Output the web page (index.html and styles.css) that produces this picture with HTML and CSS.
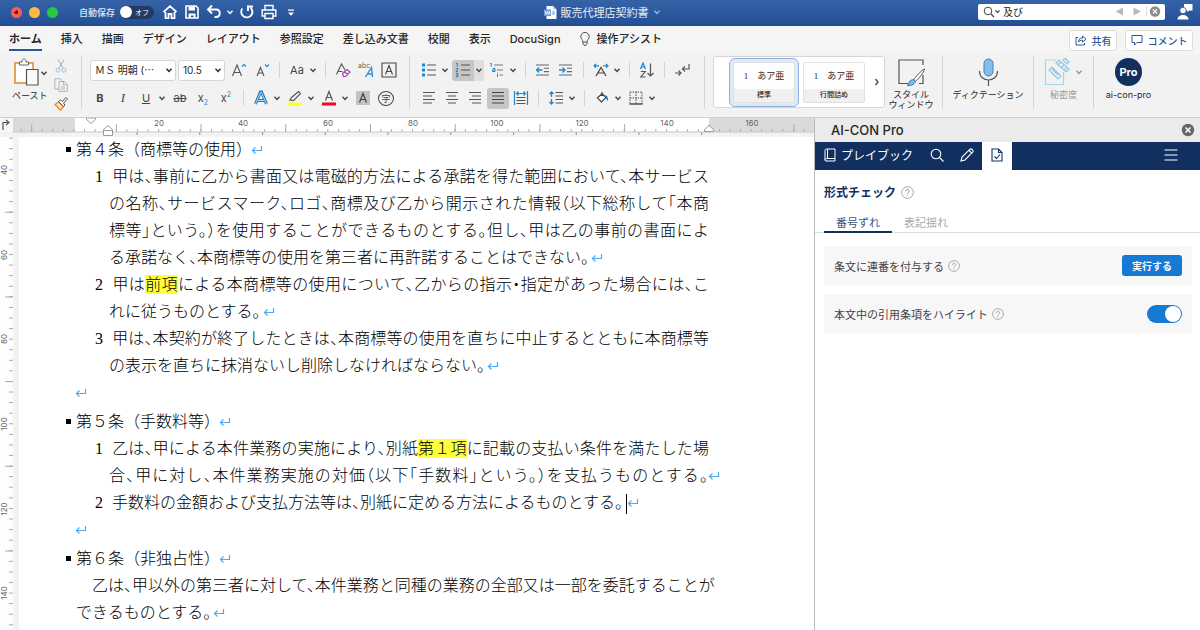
FILE: index.html
```html
<!doctype html>
<html lang="ja">
<head>
    <meta charset="UTF-8">
    <meta name="viewport" content="width=device-width, initial-scale=1.0">
    <title>販売代理店契約書</title>
    <link rel="stylesheet" href="styles.css">
</head>
<body>
<svg class="defs" aria-hidden="true">
    <symbol id="chev" viewBox="0 0 8 8"><path d="M1.5 2.8 4 5.4 6.500 2.800" fill="none" stroke="currentColor" stroke-width="1.400"/></symbol>
    <symbol id="ret" viewBox="0 0 12 10"><path d="M10.500 1v4.500H1.500M4.500 2.500l-3 3 3 3" fill="none" stroke="#4da9f5" stroke-width="1.200"/></symbol>
    <symbol id="help" viewBox="0 0 12 12"><circle cx="6" cy="6" r="5.400" fill="none" stroke="#999" stroke-width=".8"/><path d="M4.400 4.800C4.400 2.600 7.600 2.600 7.600 4.700 7.600 5.900 6 5.900 6 7.300M6 8.200v1" fill="none" stroke="#999" stroke-width=".9"/></symbol>
</svg>

<header class="titlebar">
    <div class="title-left">
        <span class="light red"></span><span class="light yellow"></span><span class="light green"></span>
        <span class="autosave">自動保存</span>
        <button class="auto-toggle"><i></i>オフ</button>
        <button class="tb" aria-label="ホーム"><svg width="16" height="16" viewBox="0 0 16 16"><path d="M1.500 8 8 2.200 14.500 8M3.500 8v6.200H6.500V10h3v4.200h3V8" fill="none" stroke="#fff" stroke-width="1.800"/></svg></button>
        <button class="tb" aria-label="保存"><svg width="16" height="16" viewBox="0 0 16 16"><path d="M2 2h10l2 2v10H2z" fill="none" stroke="#fff" stroke-width="1.600"/><path d="M4.500 2.500h6.500v4h-6.500zM4.500 9.500h7V14h-2v-2.500H7V14H4.500z" fill="#fff"/></svg></button>
        <button class="tb" aria-label="元に戻す"><svg width="16" height="16" viewBox="0 0 16 16"><path d="M6 1.500 2 5.500l4 4M2.500 5.500H10c5 0 5 7.500 0 7.500H8.500" fill="none" stroke="#fff" stroke-width="1.900"/></svg></button>
        <button class="chev light-chev" aria-label="履歴"><svg width="8" height="8"><use href="#chev"/></svg></button>
        <button class="tb" aria-label="やり直し"><svg width="16" height="16" viewBox="0 0 16 16"><path d="M3.300 4.500A5.600 5.600 0 1 0 11.500 3.600M9 7V2.500h5" fill="none" stroke="#fff" stroke-width="1.900"/></svg></button>
        <button class="tb" aria-label="印刷"><svg width="16" height="16" viewBox="0 0 16 16"><path d="M4 6V1.500h8V6M3.500 12H1.200V6h13.600v6h-2.300M4 9.500h8v5H4z" fill="none" stroke="#fff" stroke-width="1.400"/></svg></button>
        <button class="tb" aria-label="カスタマイズ"><svg width="16" height="16" viewBox="0 0 16 16"><path d="M5 5.500h6v1.200H5zM5 8.500h6l-3 3.200z" fill="#fff"/></svg></button>
    </div>
    <div class="doc-title">
        <svg width="13" height="13" viewBox="0 0 13 13"><path d="M2.500 0H9l3.500 3.500V13h-10z" fill="#fff"/><path d="M9 0v3.500h3.500z" fill="#b9cdea"/><path d="M0 3.500h7v6.500H0z" fill="#6d99dc"/><path d="m1 5 1.200 3.500L3.500 5.200 4.800 8.500 6 5" fill="none" stroke="#fff" stroke-width=".9"/><path d="M8 6h3M8 8h3" stroke="#6d99dc"/></svg>
        <span>販売代理店契約書</span>
        <svg width="8" height="8"><use href="#chev"/></svg>
    </div>
    <div class="title-right">
        <label class="search">
            <svg width="18" height="12" viewBox="0 0 18 12"><circle cx="5" cy="5" r="3.800" fill="none" stroke="#444"/><path d="m8 8 3 3M12.500 4.500l2 2 2-2" fill="none" stroke="#444" stroke-width="1.200"/></svg>
            <input type="text" value="及び" aria-label="検索">
            <svg width="48" height="14" viewBox="0 0 48 14"><path d="M9 2.500v8L1.500 6.500zM19.500 2.500v8l7.500-4z" fill="#b9b9b9"/><path d="M32.500 1.500v10" stroke="#ddd"/><circle cx="41" cy="6.500" r="5.200" fill="#8c8c8c"/><path d="m39 4.500 4 4m0-4-4 4" stroke="#fff" stroke-width="1.200"/></svg>
        </label>
        <svg width="16" height="18" viewBox="0 0 16 18"><path d="M7 1h8.500v6.500h-3L10.500 9V7.500H7z" fill="#fff"/><circle cx="6" cy="7.500" r="3.200" fill="#fff" stroke="#28539b" stroke-width=".8"/><path d="M.5 16.500c0-6 11-6 11 0z" fill="#fff"/></svg>
    </div>
</header>

<nav class="tabs">
    <a href="#" class="current">ホーム</a>
    <a href="#">挿入</a>
    <a href="#">描画</a>
    <a href="#">デザイン</a>
    <a href="#">レイアウト</a>
    <a href="#">参照設定</a>
    <a href="#">差し込み文書</a>
    <a href="#">校閲</a>
    <a href="#">表示</a>
    <a href="#">DocuSign</a>
    <a href="#" class="assist"><svg width="10" height="14" viewBox="0 0 10 14"><path d="M3 10C3 8 .8 7 .8 4.600A4.200 4.200 0 0 1 9.200 4.600C9.200 7 7 8 7 10zM3 10v2.200L4 13.300h2l1-1.100V10" fill="none" stroke="#444" stroke-width=".9"/></svg>操作アシスト</a>
    <div class="tab-actions">
        <button class="outline share"><svg width="12" height="12" viewBox="0 0 12 12"><path d="M3 3.500H1v7.500h8.500V9M3.500 8c0-3 1.500-4 4-4V2l3.500 3.200-3.500 3V6.200C5.500 6.200 4.500 6.700 3.500 8z" fill="none" stroke="#2b579a"/></svg>共有</button>
        <button class="outline comment"><svg width="12" height="12" viewBox="0 0 12 12"><path d="M1 1.500h10v7H6L3.500 11V8.500H1z" fill="none" stroke="#2b579a"/></svg>コメント</button>
    </div>
</nav>

<div class="ribbon">
    <section class="group clipboard">
        <div class="paste">
            <button class="big" aria-label="ペースト"><svg width="26" height="28" viewBox="0 0 26 28"><path d="M2 5h18v20H2z" fill="#fff" stroke="#e8a15c" stroke-width="2"/><path d="M6.500 7V4H9c0-4 4-4 4 0h2.500v3z" fill="#fff" stroke="#666"/><path d="M13.500 11.500H25V27H13.500z" fill="#fafafa" stroke="#555" stroke-width="1.200"/></svg></button>
            <button class="chev"><svg width="8" height="8"><use href="#chev"/></svg></button>
            <span>ペースト</span>
        </div>
        <div class="clip-tools">
            <button aria-label="切り取り"><svg width="14" height="14" viewBox="0 0 14 14"><path d="M4 .5 9.200 9.500M10 .5 4.800 9.500" stroke="#aaa"/><circle cx="4" cy="11.200" r="2" fill="none" stroke="#9cc6e6"/><circle cx="10" cy="11.200" r="2" fill="none" stroke="#9cc6e6"/></svg></button>
            <button aria-label="コピー"><svg width="14" height="14" viewBox="0 0 14 14"><path d="M5 11H.8V.7H6L8.500 3M5 3.500h5l3.300 3V13.400H5zM9.500 3.800v3h3.500M7 9h4M7 11h4" fill="none" stroke="#b5b5b5"/></svg></button>
            <button aria-label="書式"><svg width="14" height="14" viewBox="0 0 14 14"><path d="M1 7.500 6.500 13 9.500 9.500 4.500 5z" fill="#ffe2c4" stroke="#e8883a" stroke-width="1.300"/><path d="m4.500 4.500 5 5 1.500-1.500-1.500-2 4-4L12 .5 8.500 4.500 6.500 3z" fill="#fff" stroke="#555"/></svg></button>
        </div>
    </section>

    <section class="group font">
        <div class="row">
            <div class="pickers">
                <div class="pick"><select class="face" aria-label="フォント"><option>ＭＳ 明朝 (⋯</option></select><svg width="8" height="8"><use href="#chev"/></svg></div>
                <div class="pick"><select class="size" aria-label="サイズ"><option>10.5</option></select><svg width="8" height="8"><use href="#chev"/></svg></div>
            </div>
            <button class="ic" aria-label="拡大"><svg width="16" height="16" viewBox="0 0 16 16"><path d="M1.500 14 6 3l4.500 11M3 10.500h6" fill="none" stroke="#555" stroke-width="1.100"/><path d="m11 4.500 2-2 2 2" fill="none" stroke="#2e8fd0" stroke-width="1.300"/></svg></button>
            <button class="ic" aria-label="縮小"><svg width="16" height="16" viewBox="0 0 16 16"><path d="M3 14 6.500 5.500 10 14M4 11h5" fill="none" stroke="#555" stroke-width="1.100"/><path d="m11 2.500 2 2 2-2" fill="none" stroke="#2e8fd0" stroke-width="1.300"/></svg></button>
            <i class="sep"></i>
            <button class="ic txt">Aa</button>
            <button class="chev"><svg width="8" height="8"><use href="#chev"/></svg></button>
            <i class="sep"></i>
            <button class="ic" aria-label="書式のクリア"><svg width="16" height="16" viewBox="0 0 16 16"><path d="M1.500 12.500 6.500 2 10 8M3 9.500h4.500" fill="none" stroke="#555" stroke-width="1.100"/><path d="m7.500 11.500 4.500-4 3 2.500-4.500 4.500-2 0zM9.500 9.500l3 3" fill="#fff" stroke="#a23fb0" stroke-width="1.200"/></svg></button>
            <button class="ic" aria-label="文字の効果"><svg width="16" height="16" viewBox="0 0 16 16"><text x="0" y="6" class="tiny">abc</text><path d="M7.500 15 13.500 5.500l1 9.500M10 12h4.500" fill="none" stroke="#2e8fd0" stroke-width="1.400"/></svg></button>
            <button class="ic" aria-label="囲み線"><svg width="16" height="16" viewBox="0 0 16 16"><path d="M1 1h14v14H1zM4.500 12.500 8 3.500l3.500 9M5.600 9.500h4.800" fill="none" stroke="#444" stroke-width="1.100"/></svg></button>
        </div>
        <div class="row second">
            <button class="ic txt bold">B</button>
            <button class="ic txt italic">I</button>
            <button class="ic txt under">U</button>
            <button class="chev"><svg width="8" height="8"><use href="#chev"/></svg></button>
            <button class="ic txt strike">ab</button>
            <button class="ic txt script">x<sub>2</sub></button>
            <button class="ic txt script">x<sup>2</sup></button>
            <i class="sep"></i>
            <button class="ic" aria-label="文字飾り"><svg width="16" height="16" viewBox="0 0 16 16"><path d="M2.500 14 7.500 2h1L13.500 14M4.500 10.500h7" fill="none" stroke="#1c78c0" stroke-width="3"/><path d="M2.500 14 7.500 2.500h1L13.500 14M4.500 10.500h7" fill="none" stroke="#b5dcf5" stroke-width="1"/></svg></button>
            <button class="chev"><svg width="8" height="8"><use href="#chev"/></svg></button>
            <button class="ic" aria-label="蛍光ペン"><svg width="16" height="16" viewBox="0 0 16 16"><path d="m3.500 9 1 1.500L7 10.200 13.500 3.500 11.500 1.500 4.500 7.500zM3.500 9 2.500 10.800" fill="none" stroke="#555" stroke-width="1.200"/><path d="M1 12.500h14v3H1z" fill="#ffff2a"/></svg></button>
            <button class="chev"><svg width="8" height="8"><use href="#chev"/></svg></button>
            <button class="ic" aria-label="文字の色"><svg width="16" height="16" viewBox="0 0 16 16"><path d="M4.500 10.500 8 1.500l3.500 9M5.600 7.500h4.800" fill="none" stroke="#555" stroke-width="1.200"/><path d="M1 12.500h14v3H1z" fill="#f00c1d"/></svg></button>
            <button class="chev"><svg width="8" height="8"><use href="#chev"/></svg></button>
            <button class="ic" aria-label="網かけ"><svg width="16" height="16" viewBox="0 0 16 16"><path d="M1 1h14v14H1z" fill="#c4c2c0"/><path d="M4.500 12.500 8 3.500l3.500 9M5.600 9.500h4.800" fill="none" stroke="#444" stroke-width="1.200"/></svg></button>
            <button class="ic txt circled">字</button>
        </div>
    </section>

    <section class="group para">
        <div class="row">
            <button class="ic" aria-label="箇条書き"><svg width="16" height="16" viewBox="0 0 16 16"><path d="M1 1.500h3v3H1zM1 6.500h3v3H1zM1 11.500h3v3H1z" fill="#1c86d1"/><path d="M6 3h9M6 8h9M6 13h9" stroke="#555" stroke-width="1.200"/></svg></button>
            <button class="chev"><svg width="8" height="8"><use href="#chev"/></svg></button>
            <button class="ic on" aria-label="段落番号"><svg width="16" height="16" viewBox="0 0 16 16"><path d="M1 1.500h1.300v3.200M.8 6.500h2v1.500l-2 1.500h2.200M.8 11.200h2v3.500h-2M1 13h2" fill="none" stroke="#1c86d1"/><path d="M6 3h9M6 8h9M6 13h9" stroke="#555" stroke-width="1.200"/></svg></button>
            <button class="chev on-chev"><svg width="8" height="8"><use href="#chev"/></svg></button>
            <button class="ic" aria-label="アウトライン"><svg width="16" height="16" viewBox="0 0 16 16"><path d="M1 1.500h1.300v3.200M3.500 6.500h2.500v3h-2.500v-1.500h2.500M8.500 12v3M8.500 10.500v.8" fill="none" stroke="#1c86d1"/><path d="M5 3h9M8 8h6M10.500 13H14" stroke="#777" stroke-width="1.200"/></svg></button>
            <button class="chev"><svg width="8" height="8"><use href="#chev"/></svg></button>
            <i class="sep"></i>
            <button class="ic" aria-label="インデント解除"><svg width="16" height="16" viewBox="0 0 16 16"><path d="M1 3h13M9 6.300h5M9 9.600h5M1 13h13" stroke="#666" stroke-width="1.100"/><path d="M7.500 8H1.500M4 5.500 1.500 8 4 10.500" fill="none" stroke="#1c86d1" stroke-width="1.300"/></svg></button>
            <button class="ic" aria-label="インデント"><svg width="16" height="16" viewBox="0 0 16 16"><path d="M1 3h13M9 6.300h5M9 9.600h5M1 13h13" stroke="#666" stroke-width="1.100"/><path d="M1 8h6M4.500 5.500 7 8l-2.500 2.500" fill="none" stroke="#1c86d1" stroke-width="1.300"/></svg></button>
            <i class="sep"></i>
            <button class="ic" aria-label="拡張書式"><svg width="16" height="16" viewBox="0 0 16 16"><path d="M3 14 8 5.500 13 14M5 11h6" fill="none" stroke="#444" stroke-width="1.200"/><path d="M1 3.800h5M3 1.800l-2 2 2 2M15 3.800h-5M13 1.800l2 2-2 2" fill="none" stroke="#1c86d1" stroke-width="1.200"/></svg></button>
            <button class="chev"><svg width="8" height="8"><use href="#chev"/></svg></button>
            <i class="sep"></i>
            <button class="ic" aria-label="並べ替え"><svg width="16" height="16" viewBox="0 0 16 16"><path d="M1.500 7 4 1l2.500 6M2.300 5h3.400" fill="none" stroke="#1c86d1" stroke-width="1.200"/><path d="M1.800 9.500h4.400L1.800 15h4.800M11.500 1.500V14M8.500 11l3 3 3-3" fill="none" stroke="#555" stroke-width="1.200"/></svg></button>
            <i class="sep"></i>
            <button class="ic" aria-label="編集記号"><svg width="16" height="16" viewBox="0 0 16 16"><path d="M1 11h6M4.500 8.500 7 11l-2.500 2.500M15 2v5H8.500M11 4.500 8.500 7l2.500 2.500" fill="none" stroke="#555" stroke-width="1.200"/></svg></button>
        </div>
        <div class="row second">
            <button class="ic" aria-label="左揃え"><svg width="16" height="16" viewBox="0 0 16 16"><path d="M2 2.500h12M2 6h9M2 9.500h12M2 13h9" stroke="#555" stroke-width="1.200"/></svg></button>
            <button class="ic" aria-label="中央揃え"><svg width="16" height="16" viewBox="0 0 16 16"><path d="M2 2.500h12M4 6h8M2 9.500h12M4 13h8" stroke="#555" stroke-width="1.200"/></svg></button>
            <button class="ic" aria-label="右揃え"><svg width="16" height="16" viewBox="0 0 16 16"><path d="M2 2.500h12M5 6h9M2 9.500h12M5 13h9" stroke="#555" stroke-width="1.200"/></svg></button>
            <button class="ic on whole" aria-label="両端揃え"><svg width="16" height="16" viewBox="0 0 16 16"><path d="M2 2.500h12M2 6h12M2 9.500h12M2 13h12" stroke="#444" stroke-width="1.200"/></svg></button>
            <button class="ic" aria-label="均等割り付け"><svg width="16" height="16" viewBox="0 0 16 16"><path d="M1.500 1v14M14.500 1v14M3.500 3.500h9M5.500 1.500l-2 2 2 2M10.500 1.500l2 2-2 2" fill="none" stroke="#1c86d1" stroke-width="1.200"/><path d="M3.500 7.500h9M3.500 10.500h9M3.500 13.500h9" stroke="#555" stroke-width="1.200"/></svg></button>
            <i class="sep"></i>
            <button class="ic" aria-label="行間"><svg width="16" height="16" viewBox="0 0 16 16"><path d="M3.500 2v5M1.500 4l2-2 2 2M3.500 9v5M1.500 12l2 2 2-2" fill="none" stroke="#1c86d1" stroke-width="1.300"/><path d="M7.500 2.500H15M7.500 6H15M7.500 9.500H15M7.500 13H15" stroke="#555" stroke-width="1.200"/></svg></button>
            <button class="chev"><svg width="8" height="8"><use href="#chev"/></svg></button>
            <i class="sep"></i>
            <button class="ic" aria-label="塗りつぶし"><svg width="16" height="16" viewBox="0 0 16 16"><path d="m3.500 8 4.500-4.500 4 4-4.500 4.500zM8 6V2" fill="#fff" stroke="#444" stroke-width="1.200"/><path d="M11 5.500c2 0 3.500 2 3 5.500-1.500-1-1.500-3-3-4z" fill="#1c78c0"/></svg></button>
            <button class="chev"><svg width="8" height="8"><use href="#chev"/></svg></button>
            <button class="ic" aria-label="罫線"><svg width="16" height="16" viewBox="0 0 16 16"><path d="M2 2h12v12M2 2v12M8 2v12M2 8h12" fill="none" stroke="#555" stroke-dasharray="1.500 1"/><path d="M1.500 14h13" stroke="#333" stroke-width="1.300"/></svg></button>
            <button class="chev"><svg width="8" height="8"><use href="#chev"/></svg></button>
        </div>
    </section>

    <section class="group styles">
        <div class="gallery">
            <button class="card selected"><span class="sample">1　あア亜</span><span class="name">標準</span></button>
            <button class="card"><span class="sample">1　あア亜</span><span class="name">行間詰め</span></button>
            <button class="more" aria-label="次へ"><svg width="6" height="8" viewBox="0 0 6 8"><path d="m1.500 1 2.500 3-2.500 3" fill="none" stroke="#444" stroke-width="1.300"/></svg></button>
        </div>
        <button class="tool"><svg width="28" height="28" viewBox="0 0 28 28"><path d="M17 25.500H2V2h24v5M26 17v8.500h-4" fill="none" stroke="#555" stroke-width="1.200"/><path d="M27.500 11c-3 1-9 8-11 11l2 1.500C21 21 27 15 27.500 11z" fill="#fff" stroke="#555"/><path d="M18 22.500c1 3-3 5.500-8 5 2-1 1.500-3 3-4.500 1.500-1.500 4-1.800 5-.5z" fill="#7fbdf0" stroke="#2b7fc4"/></svg><span>スタイル<br>ウィンドウ</span></button>
    </section>
    <section class="group dictation">
        <button class="tool"><svg width="28" height="28" viewBox="0 0 28 28"><rect x="10" y="1" width="9" height="17" rx="4.500" fill="#83bdec" stroke="#3f7fb8"/><path d="M5.500 13c0 12 18 12 18 0M14.500 22v6" fill="none" stroke="#555" stroke-width="1.200"/></svg><span>ディクテーション</span></button>
    </section>
    <section class="group secret">
        <button class="tool dim"><i class="icon-pair"><svg width="26" height="28" viewBox="0 0 26 28"><path d="M12 2H1.500v24.500h18V14" fill="none" stroke="#a9d3ea" stroke-width="1.200"/><path d="m5 12 3-3 9 9-3 3zM8 11l6 6M12 5l3-3 10 9-3 3zM14 7l3-3M17 10l3-3M20 12l3-3M19 2l2-2 4 4-2 2z" fill="#e8f3f9" stroke="#93c6e2" stroke-width="1.200"/></svg><svg width="8" height="8"><use href="#chev"/></svg></i><span>秘密度</span></button>
    </section>
    <section class="group addin">
        <button class="tool"><b class="pro">Pro</b><span>ai-con-pro</span></button>
    </section>
</div>

<main class="workspace">
    <div class="editor">
        <svg class="ruler-h" height="19" aria-hidden="true">
            <defs>
                <pattern id="minor" x="10" width="10.580" height="20" patternUnits="userSpaceOnUse"><path d="M.5 11v3" stroke="#aaa"/></pattern>
                <pattern id="major" x="31.200" width="84.700" height="20" patternUnits="userSpaceOnUse"><path d="M.5 6v8" stroke="#aaa"/></pattern>
                <pattern id="stops" x="11" width="62.750" height="20" patternUnits="userSpaceOnUse"><path d="M.5 14v3" stroke="#888"/></pattern>
            </defs>
            <rect width="100%" height="20" fill="#f3f3f3"/>
            <rect width="100%" height="14" fill="#dadada"/>
            <rect width="13" height="14" fill="#f7f7f7"/>
            <rect x="75" width="634" height="14" fill="#fff"/>
            <rect x="14" width="100%" height="14" fill="url(#minor)"/>
            <rect x="14" width="100%" height="14" fill="url(#major)"/>
            <rect x="130" width="579" height="20" fill="url(#stops)"/>
            <path d="M13 14h801" stroke="#c9c9c9"/>
            <path d="M3 12V4.500h5M6 2l3 2.500L6 7" fill="none" stroke="#555" stroke-width="1.200"/>
            <g text-anchor="middle">
                <text x="159" y="8">20</text><text x="243" y="8">40</text><text x="328" y="8">60</text><text x="413" y="8">80</text><text x="497" y="8">100</text><text x="582" y="8">120</text><text x="667" y="8">140</text><text x="752" y="8">160</text>
            </g>
            <path d="M86.500 0v1.500L91 5.500l4.500-4V0zM103.500 17.500v-6l4.500-4 4.500 4v6zM103.500 12.500h9M704.500 13.500V11.500L709 7.500l4.500 4v2z" fill="#fff" stroke="#999"/>
        </svg>
        <div class="canvas">
            <svg class="ruler-v" width="13" aria-hidden="true">
                <defs>
                    <pattern id="vminor" y="11.200" width="13" height="10.580" patternUnits="userSpaceOnUse"><path d="M9 .5h4" stroke="#aaa"/></pattern>
                    <pattern id="vmajor" y="74.700" width="13" height="84.700" patternUnits="userSpaceOnUse"><path d="M5 .5h8" stroke="#aaa"/></pattern>
                </defs>
                <rect width="13" height="100%" fill="#fdfdfd"/>
                <rect width="13" height="100%" fill="url(#vminor)"/>
                <rect width="13" height="100%" fill="url(#vmajor)"/>
                <g text-anchor="middle">
                    <text transform="translate(7 33) rotate(-90)">40</text><text transform="translate(7 118) rotate(-90)">60</text><text transform="translate(7 202) rotate(-90)">80</text><text transform="translate(7 287) rotate(-90)">100</text><text transform="translate(7 372) rotate(-90)">120</text><text transform="translate(7 456) rotate(-90)">140</text>
                </g>
            </svg>
            <div class="page">
                <article>
                    <h2>第４条（商標等の使用）<svg class="ret"><use href="#ret"/></svg></h2>
                    <p class="item"><span class="line"><b>1</b>甲は、事前に乙から書面又は電磁的方法による承諾を得た範囲において、本サービス</span>
                        <span class="line">の名称、サービスマーク、ロゴ、商標及び乙から開示された情報（以下総称して「本商</span>
                        <span class="line">標等」という。）を使用することができるものとする。但し、甲は乙の事前の書面によ</span>
                        <span class="last">る承諾なく、本商標等の使用を第三者に再許諾することはできない。<svg class="ret"><use href="#ret"/></svg></span></p>
                    <p class="item"><span class="line"><b>2</b>甲は<mark>前項</mark>による本商標等の使用について、乙からの指示・指定があった場合には、こ</span>
                        <span class="last">れに従うものとする。<svg class="ret"><use href="#ret"/></svg></span></p>
                    <p class="item"><span class="line"><b>3</b>甲は、本契約が終了したときは、本商標等の使用を直ちに中止するとともに本商標等</span>
                        <span class="last">の表示を直ちに抹消ないし削除しなければならない。<svg class="ret"><use href="#ret"/></svg></span></p>
                    <p class="empty"><svg class="ret"><use href="#ret"/></svg></p>
                </article>
                <article>
                    <h2>第５条（手数料等）<svg class="ret"><use href="#ret"/></svg></h2>
                    <p class="item"><span class="line"><b>1</b>乙は、甲による本件業務の実施により、別紙<mark>第１項</mark>に記載の支払い条件を満たした場</span>
                        <span class="line">合、甲に対し、本件業務実施の対価（以下「手数料」という。）を支払うものとする。<svg class="ret hang"><use href="#ret"/></svg></span></p>
                    <p class="item"><span class="last first"><b>2</b>手数料の金額および支払方法等は、別紙に定める方法によるものとする。<i class="caret"></i><svg class="ret"><use href="#ret"/></svg></span></p>
                    <p class="empty"><svg class="ret"><use href="#ret"/></svg></p>
                </article>
                <article>
                    <h2>第６条（非独占性）<svg class="ret"><use href="#ret"/></svg></h2>
                    <p class="body"><span class="line">乙は、甲以外の第三者に対して、本件業務と同種の業務の全部又は一部を委託することが</span>
                        <span class="last">できるものとする。<svg class="ret"><use href="#ret"/></svg></span></p>
                </article>
            </div>
        </div>
    </div>

    <aside class="panel">
        <div class="panel-head">
            <span>AI-CON Pro</span>
            <button aria-label="閉じる"><svg width="14" height="14" viewBox="0 0 14 14"><circle cx="7" cy="7" r="6.200" fill="#666"/><path d="m4.500 4.500 5 5m0-5-5 5" stroke="#fff" stroke-width="1.500"/></svg></button>
        </div>
        <nav class="panel-nav">
            <button class="book"><svg width="12" height="14" viewBox="0 0 12 14"><path d="M11 10.500V1H2.500C1.500 1 1 1.700 1 2.500v9C1 12.500 1.700 13 2.500 13H11M11 10.500H2.500c-2 0-2 2.500 0 2.500M3.500 1v9.500M11 10.500V13" fill="none" stroke="#fff"/></svg>プレイブック</button>
            <button aria-label="検索"><svg width="14" height="14" viewBox="0 0 14 14"><circle cx="6" cy="6" r="4.800" fill="none" stroke="#fff" stroke-width="1.100"/><path d="m9.500 9.500 4 4" stroke="#fff" stroke-width="1.100"/></svg></button>
            <button aria-label="編集"><svg width="14" height="14" viewBox="0 0 14 14"><path d="m1 13 1-4L10 1.200c1.500-1 3.800 1 2.800 2.700L5 12zM9 2.500 11.800 5.200" fill="none" stroke="#fff" stroke-width="1.100"/></svg></button>
            <button class="active" aria-label="形式チェック"><svg width="12" height="14" viewBox="0 0 12 14"><path d="M1 1h6.500L11 4.500V13H1zM7.500 1v3.500H11M3.500 8.500l2 2 3.500-4" fill="none" stroke="#12336a" stroke-width="1.100"/></svg></button>
            <button class="menu" aria-label="メニュー"><svg width="14" height="14" viewBox="0 0 14 14"><path d="M.5 2h13M.5 7h13M.5 12h13" stroke="#fff" stroke-width="1.200"/></svg></button>
        </nav>
        <div class="panel-title"><h1>形式チェック</h1><svg width="13" height="13"><use href="#help"/></svg></div>
        <nav class="subtabs"><a href="#" class="active">番号ずれ</a><a href="#">表記揺れ</a></nav>
        <div class="cards">
            <div class="setting">条文に連番を付与する<svg width="12" height="12"><use href="#help"/></svg><button class="run">実行する</button></div>
            <div class="setting"><label for="hl">本文中の引用条項をハイライト</label><svg width="12" height="12"><use href="#help"/></svg><input type="checkbox" id="hl" class="switch" checked></div>
        </div>
    </aside>
</main>
</body>
</html>
```
FILE: styles.css
```css
* {
    box-sizing: border-box;
}
body {
    margin: 0;
    height: 100vh;
    display: flex;
    flex-direction: column;
    overflow: hidden;
    font-family: Inter, "Noto Sans CJK JP", sans-serif;
    font-size: 11px;
    color: #262626;
    background: #f3f2f1;
}
button {
    margin: 0;
    padding: 0;
    border: 0;
    background: none;
    font: inherit;
    color: inherit;
}
a {
    color: inherit;
    text-decoration: none;
}
svg {
    display: block;
    flex: none;
}
.defs {
    position: absolute;
    width: 0;
    height: 0;
}

/* title bar */
.titlebar {
    flex: none;
    height: 26px;
    display: grid;
    grid-template-columns: 1fr auto 1fr;
    align-items: center;
    padding: 0 7px 2px 11px;
    background: linear-gradient(#3663a8, #224e94);
    color: #fff;
}
.title-left,
.title-right,
.doc-title {
    display: flex;
    align-items: center;
}
.light {
    width: 11px;
    height: 11px;
    margin-right: 7px;
    border-radius: 50%;
}
.red {
    background: radial-gradient(#7a0c0c 2px, #fc5b57 2px);
}
.yellow {
    background: #fdbc40;
}
.green {
    background: #28c840;
}
.autosave {
    margin-left: 14px;
    font-size: 9px;
    color: #dfe7f4;
    font-weight: 500;
}
.auto-toggle {
    display: flex;
    align-items: center;
    gap: 3px;
    width: 34px;
    height: 13px;
    margin: 0 8px 0 5px;
    border-radius: 7px;
    background: #233a62;
    font-size: 7px;
}
.auto-toggle i {
    width: 12px;
    height: 12px;
    border-radius: 50%;
    background: #fff;
}
.tb {
    width: 16px;
    margin-right: 6px;
}
.doc-title {
    gap: 4px;
    font-size: 11px;
    color: #e5edf8;
}
.doc-title svg:last-child {
    color: #9db6dc;
}
.title-right {
    justify-content: flex-end;
    gap: 12px;
}
.search {
    display: flex;
    align-items: center;
    width: 187px;
    height: 16px;
    padding: 0 3px 0 5px;
    border-radius: 2px;
    background: #fff;
}
.search input {
    flex: 1;
    min-width: 0;
    height: 14px;
    padding: 0 0 0 2px;
    border: 0;
    background: none;
    font: 10px/14px "Noto Sans CJK JP", sans-serif;
    color: #222;
}

/* ribbon tabs */
.tabs {
    flex: none;
    height: 28px;
    display: flex;
    align-items: center;
    gap: 19px;
    padding: 0 7px 0 9px;
    background: #f6f5f5;
    font-weight: 500;
    white-space: nowrap;
}
.tabs a {
    height: 22px;
    line-height: 20px;
}
.tabs .current {
    border-bottom: 2px solid #2b579a;
    font-weight: 700;
}
.assist {
    display: flex;
    gap: 7px;
}
.assist svg {
    margin-top: 3px;
}
.tab-actions {
    display: flex;
    gap: 8px;
    margin-left: auto;
}
.outline {
    display: flex;
    align-items: center;
    justify-content: center;
    gap: 5px;
    width: 48px;
    height: 21px;
    border: 1px solid #dcdcdc;
    border-radius: 3px;
    background: #fff;
    font-size: 10px;
    font-weight: 500;
    color: #2b579a;
}
.comment {
    width: 68px;
}

/* ribbon */
.ribbon {
    flex: none;
    height: 64px;
    display: flex;
    padding-top: 2px;
    border-bottom: 1px solid #cfcfcf;
    background: #f3f2f2;
}
.group {
    flex: none;
    height: 53px;
    border-right: 1px solid #d4d4d4;
}
.group:last-child {
    border: 0;
}
.row {
    display: flex;
    align-items: center;
    gap: 7px;
    height: 28px;
}
.sep {
    flex: none;
    width: 1px;
    height: 16px;
    margin: 0 2px;
    background: #d4d4d4;
}
.ic {
    flex: none;
    width: 16px;
    height: 21px;
    display: flex;
    align-items: center;
    justify-content: center;
}
.chev {
    flex: none;
    width: 8px;
    margin: 0 -1px 0 -3px;
    color: #444;
}
.light-chev {
    margin: 0 5px 0 -2px;
    color: #fff;
}
.clipboard {
    display: flex;
    gap: 6px;
    width: 82px;
    padding-left: 12px;
}
.paste {
    display: grid;
    grid-template-columns: 28px 8px;
    align-items: center;
    align-content: start;
    width: 36px;
    font-size: 9px;
    line-height: 12px;
    white-space: nowrap;
}
.paste .big {
    height: 34px;
    padding: 2px 1px 4px;
}
.paste .chev {
    margin: 0;
}
.paste span {
    grid-column: 1 / 3;
}
.clip-tools {
    display: flex;
    flex-direction: column;
    gap: 5px;
    padding-top: 3px;
}
.font {
    width: 328px;
    padding-left: 8px;
}
.font .second {
    padding-left: 2px;
}
.pickers {
    display: flex;
    gap: 2px;
    margin-right: -1px;
}
.pick {
    position: relative;
}
.pick svg {
    position: absolute;
    right: 3px;
    top: 6px;
    pointer-events: none;
}
.pick select {
    appearance: none;
    display: block;
    height: 21px;
    padding: 0 4px;
    border: 1px solid #d5d5d5;
    border-radius: 3px;
    background: #fff;
    color: #262626;
    font: 10px Inter, "Noto Sans CJK JP", sans-serif;
}
.pick .face {
    width: 86px;
}
.pick .size {
    width: 47px;
}
.txt {
    font-size: 11px;
    color: #444;
}
.bold {
    font-weight: 700;
}
.italic {
    font-family: "Liberation Serif", serif;
    font-size: 13px;
    font-style: italic;
}
.under {
    text-decoration: underline;
}
.strike {
    text-decoration: line-through;
}
.script sub,
.script sup {
    font-size: 7px;
    line-height: 7px;
    color: #1c86d1;
}
.script sub {
    padding-top: 8px;
}
.script sup {
    padding-bottom: 8px;
}
.circled {
    height: 15px;
    border: 1px solid #444;
    border-radius: 50%;
    font-size: 9px;
}
.tiny {
    font-size: 7px;
    fill: #666;
}
.para {
    width: 295px;
    padding-left: 11px;
}
.on {
    width: 22px;
    margin: 0 -3px;
    border-radius: 3px;
    background: #c8c6c4;
}
.on:not(.whole) {
    border-radius: 3px 0 0 3px;
}
.on-chev {
    width: 10px;
    height: 21px;
    margin: 0 -2px 0 -4px;
    padding-left: 1px;
    border-radius: 0 3px 3px 0;
    background: #e0dfde;
}
.styles {
    display: flex;
    gap: 4px;
    width: 238px;
    padding-left: 8px;
}
.gallery {
    display: flex;
    align-items: center;
    width: 172px;
    height: 52px;
    padding-left: 15px;
    border: 1px solid #d5d5d5;
    border-radius: 3px;
    background: #fff;
}
.card {
    width: 62px;
    height: 41px;
    margin: 0 4px;
    display: flex;
    flex-direction: column;
    border: 1px solid #e0e0e0;
    border-radius: 2px;
    background: #fdfdfd;
}
.card.selected {
    outline: 1px solid #8eaedc;
    outline-offset: 3px;
    box-shadow: 0 0 0 3px #dfe9f7;
}
.sample {
    width: 100%;
    height: 26px;
    line-height: 26px;
    font-family: "Liberation Serif", "Noto Sans CJK JP", serif;
    font-size: 9px;
    font-weight: 400;
}
.name {
    width: 100%;
    flex: 1;
    background: #f0f0f0;
    font-size: 7px;
    font-weight: 500;
    line-height: 12px;
}
.more {
    margin: 0 auto;
}
.tool {
    width: 100%;
    display: flex;
    flex-direction: column;
    align-items: center;
    gap: 4px;
    padding-top: 2px;
    font-size: 9px;
    line-height: 10px;
    white-space: nowrap;
}
.styles .tool {
    width: 44px;
}
.dictation {
    width: 91px;
}
.secret {
    width: 60px;
}
.dim {
    color: #999;
}
.icon-pair {
    display: flex;
    align-items: center;
    gap: 5px;
}
.addin {
    width: 69px;
}
.pro {
    width: 27px;
    height: 28px;
    border-radius: 50%;
    background: #12305f;
    color: #fff;
    font-size: 11px;
    line-height: 28px;
}

/* document */
.workspace {
    flex: 1;
    min-height: 0;
    display: flex;
}
.editor {
    flex: 1;
    min-width: 0;
    display: flex;
    flex-direction: column;
    overflow: hidden;
    background: #f3f3f3;
}
.ruler-h {
    width: 100%;
}
.ruler-h text,
.ruler-v text {
    font-size: 8px;
    fill: #666;
}
.canvas {
    flex: 1;
    min-height: 0;
    display: flex;
    gap: 6px;
}
.ruler-v {
    height: 100%;
}
.page {
    flex: 1;
    min-width: 0;
    padding: 0 105px 0 57px;
    background: #fff;
    color: #000;
    font-family: "Liberation Serif", "Noto Sans CJK JP", serif;
    font-size: 16px;
    font-weight: 300;
    line-height: 27px;
    white-space: nowrap;
}
article {
    margin-bottom: 2px;
}
article:first-child {
    margin-top: -1px;
}
.page h2,
.page p {
    margin: 0;
    height: 27px;
    font-size: 16px;
    font-weight: 300;
}
.page h2 {
    display: flex;
    align-items: center;
}
.page h2::before {
    content: "";
    width: 5px;
    height: 5px;
    margin-left: -10px;
    margin-right: 5px;
    background: #000;
}
.page p {
    height: auto;
    font-feature-settings: "halt";
}
.page .item {
    padding-left: 33px;
}
.line,
.last {
    display: block;
    height: 27px;
}
.line {
    text-align: justify;
    text-align-last: justify;
}
.item .line:first-child,
.item .first {
    margin-left: -14px;
}
.item b {
    display: inline-block;
    width: 17px;
    font-weight: 400;
    text-align-last: left;
}
.body .line:first-child {
    padding-left: 16px;
}
.page mark {
    padding: 1px 0;
    background: #ffff3c;
}
.ret {
    display: inline-block;
    width: 12px;
    height: 10px;
    margin-left: 2px;
}
.page h2 .ret,
.empty .ret {
    margin-left: -1px;
}
.page .hang {
    margin-left: -1px;
    margin-right: -11px;
}
.caret {
    display: inline-block;
    width: 1px;
    height: 20px;
    margin-left: 3px;
    margin-right: -2px;
    vertical-align: middle;
    background: #000;
}

/* add-in panel */
.panel {
    width: 386px;
    flex: none;
    border-left: 1px solid #b9b9b9;
    background: #fff;
}
.panel-head {
    display: flex;
    align-items: center;
    justify-content: space-between;
    height: 24px;
    padding: 0 5px 0 16px;
    background: #ebebeb;
    font-size: 13px;
    font-weight: 500;
}
.panel-nav {
    display: flex;
    height: 28px;
    background: #12305f;
    color: #fff;
}
.panel-nav button {
    display: flex;
    align-items: center;
    justify-content: center;
    width: 30px;
    padding-bottom: 3px;
}
.panel-nav .book {
    width: 107px;
    gap: 5px;
    font-size: 12px;
}
.panel-nav .active {
    background: #fff;
}
.panel-nav .menu {
    margin-left: auto;
    margin-right: 14px;
}
.panel-title {
    display: flex;
    align-items: center;
    gap: 5px;
    height: 45px;
    padding-left: 9px;
}
.panel-title h1 {
    margin: 0;
    font-size: 12px;
    line-height: 18px;
    color: #12305f;
}
.subtabs {
    display: flex;
    height: 18px;
    padding-left: 9px;
    border-bottom: 1px solid #dcdcdc;
    color: #aaa;
    line-height: 16px;
}
.subtabs a {
    width: 68px;
    height: 18px;
    text-align: center;
}
.subtabs .active {
    border-bottom: 2px solid #12305f;
    color: #3d5684;
}
.cards {
    display: flex;
    flex-direction: column;
    gap: 9px;
    padding: 13px 8px 0 9px;
}
.setting {
    display: flex;
    align-items: center;
    gap: 4px;
    height: 39px;
    padding: 0 10px;
    border-radius: 3px;
    background: #f7f7f7;
    color: #444;
}
.run {
    width: 60px;
    height: 21px;
    margin-left: auto;
    border-radius: 3px;
    background: #1679d3;
    color: #fff;
    font-size: 10px;
    font-weight: 700;
}
.switch {
    appearance: none;
    position: relative;
    width: 35px;
    height: 18px;
    margin: 0 0 0 auto;
    border-radius: 9px;
    background: #1679d3;
}
.switch::after {
    content: "";
    position: absolute;
    right: 1px;
    top: 1px;
    width: 16px;
    height: 16px;
    border-radius: 50%;
    background: #fff;
}
```
